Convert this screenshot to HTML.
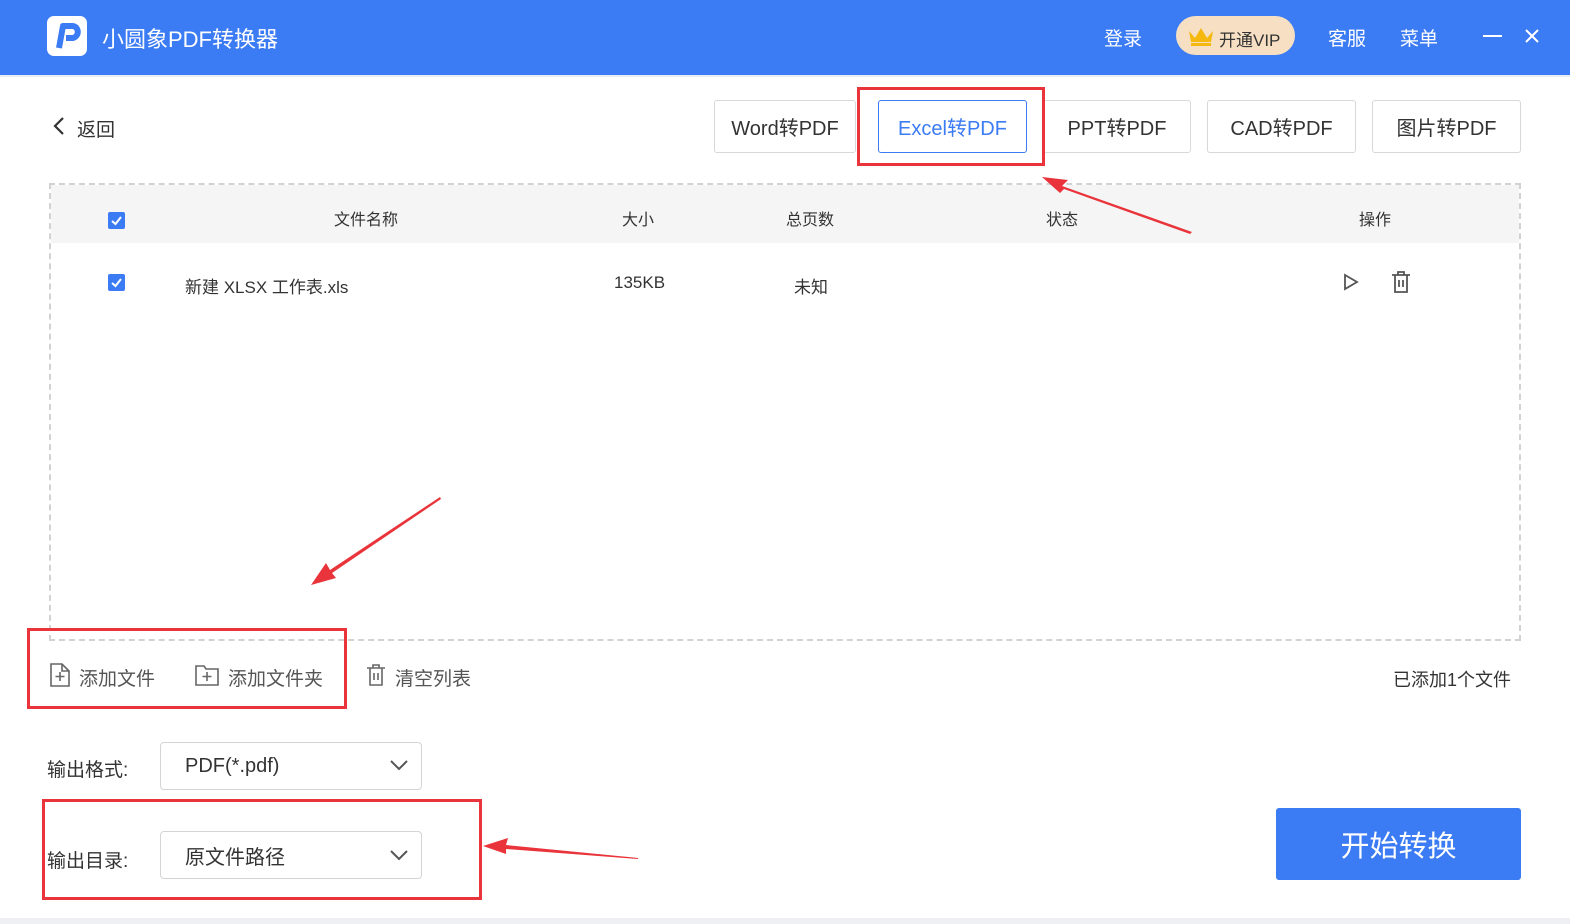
<!DOCTYPE html><html><head><meta charset="utf-8"><style>
*{margin:0;padding:0;box-sizing:border-box}
body{width:1570px;height:924px;position:relative;background:#fff;font-family:"Liberation Sans","Noto Sans CJK SC",sans-serif;color:#333;overflow:hidden}
.a{position:absolute}
.hdr{left:0;top:0;width:1570px;height:75px;background:#3b7bf4}
.tab{position:absolute;top:100px;height:53px;border:1px solid #d8d8d8;border-radius:3px;font-size:20px;color:#333;display:flex;align-items:center;justify-content:center;background:#fff}
.red{position:absolute;border:3px solid #e8343a}
.sel{position:absolute;height:48px;border:1px solid #d4d4d4;border-radius:4px;display:flex;align-items:center;padding-left:24px;font-size:20px;color:#333;background:#fff}
.cb{position:absolute;width:17px;height:17px;background:#3b7bf4;border-radius:2px}
</style></head><body>
<div class="a hdr"></div>
<div class="a" style="left:47px;top:16px;width:40px;height:40px;background:#fff;border-radius:7px"></div>
<svg class="a" style="left:47px;top:16px" width="40" height="40"><path d="M12 32 L16 10 H25 C32 10 33 20 26 22 H19" fill="none" stroke="#3b7bf4" stroke-width="6" stroke-linejoin="round"/></svg>
<div class="a" style="left:102px;top:22px;font-size:22px;color:#fff">小圆象PDF转换器</div>
<div class="a" style="left:1104px;top:24px;font-size:19px;color:#fff">登录</div>
<div class="a" style="left:1176px;top:16px;width:119px;height:39px;background:#f6dfc2;border-radius:20px"></div>
<svg class="a" style="left:1187px;top:25px" width="28" height="22"><path d="M2 6 L8 13 L14 3 L20 13 L26 6 L24 17 H4Z" fill="#f5b80e"/><rect x="4" y="18" width="20" height="3" fill="#f5b80e"/></svg>
<div class="a" style="left:1219px;top:26px;font-size:17px;color:#333">开通VIP</div>
<div class="a" style="left:1328px;top:24px;font-size:19px;color:#fff">客服</div>
<div class="a" style="left:1400px;top:24px;font-size:19px;color:#fff">菜单</div>
<div class="a" style="left:1483px;top:35px;width:19px;height:2px;background:#fff"></div>
<svg class="a" style="left:1524px;top:28px" width="16" height="16"><path d="M2 2L14 14M14 2L2 14" stroke="#fff" stroke-width="2"/></svg>
<div class="a" style="left:0;top:75px;width:1570px;height:2px;background:#e9edf5"></div>

<svg class="a" style="left:52px;top:116px" width="14" height="20"><path d="M11 2L3 10L11 18" fill="none" stroke="#333" stroke-width="2.2"/></svg>
<div class="a" style="left:77px;top:115px;font-size:19px">返回</div>

<div class="tab" style="left:714px;width:142px">Word转PDF</div>
<div class="tab" style="left:878px;width:149px;border-color:#3b7bf4;color:#3b7bf4">Excel转PDF</div>
<div class="tab" style="left:1043px;width:148px">PPT转PDF</div>
<div class="tab" style="left:1207px;width:149px">CAD转PDF</div>
<div class="tab" style="left:1372px;width:149px">图片转PDF</div>
<div class="red" style="left:857px;top:87px;width:188px;height:79px"></div>

<div class="a" style="left:49px;top:183px;width:1472px;height:458px;border:2px dashed #d2d2d2"></div>
<div class="a" style="left:51px;top:185px;width:1468px;height:58px;background:#f5f5f5"></div>
<div class="cb" style="left:108px;top:212px"></div>
<svg class="a" style="left:108px;top:212px" width="17" height="17"><path d="M4 9L7.5 12L13 5" fill="none" stroke="#fff" stroke-width="2"/></svg>
<div class="a" style="left:334px;top:206px;font-size:16px">文件名称</div>
<div class="a" style="left:622px;top:206px;font-size:16px">大小</div>
<div class="a" style="left:786px;top:206px;font-size:16px">总页数</div>
<div class="a" style="left:1046px;top:206px;font-size:16px">状态</div>
<div class="a" style="left:1359px;top:206px;font-size:16px">操作</div>
<div class="cb" style="left:108px;top:274px"></div>
<svg class="a" style="left:108px;top:274px" width="17" height="17"><path d="M4 9L7.5 12L13 5" fill="none" stroke="#fff" stroke-width="2"/></svg>
<div class="a" style="left:185px;top:273px;font-size:17px">新建 XLSX 工作表.xls</div>
<div class="a" style="left:614px;top:273px;font-size:17px">135KB</div>
<div class="a" style="left:794px;top:273px;font-size:17px">未知</div>
<svg class="a" style="left:1342px;top:272px" width="18" height="20"><path d="M3 3L15 10L3 17Z" fill="none" stroke="#555" stroke-width="1.8"/></svg>
<svg class="a" style="left:1390px;top:270px" width="22" height="24"><path d="M2 5H20M8 5V2H14V5M5 5V22H17V5M9 10V17M13 10V17" fill="none" stroke="#555" stroke-width="1.8"/></svg>

<svg class="a" style="left:49px;top:662px" width="22" height="26"><path d="M2 2H13L20 9V24H2Z M13 2V9H20 M11 10V19 M6.5 14.5H15.5" fill="none" stroke="#666" stroke-width="1.6"/></svg>
<div class="a" style="left:79px;top:664px;font-size:19px;color:#555">添加文件</div>
<svg class="a" style="left:194px;top:663px" width="26" height="24"><path d="M2 3H10L12 6H24V22H2Z M13 9V18 M8.5 13.5H17.5" fill="none" stroke="#666" stroke-width="1.6"/></svg>
<div class="a" style="left:228px;top:664px;font-size:19px;color:#555">添加文件夹</div>
<svg class="a" style="left:365px;top:663px" width="22" height="24"><path d="M2 5H20M8 5V2H14V5M5 5V22H17V5M9 10V17M13 10V17" fill="none" stroke="#666" stroke-width="1.6"/></svg>
<div class="a" style="left:395px;top:664px;font-size:19px;color:#555">清空列表</div>
<div class="a" style="left:1393px;top:666px;font-size:18px;color:#333">已添加1个文件</div>
<div class="red" style="left:27px;top:628px;width:320px;height:81px"></div>

<div class="a" style="left:47px;top:755px;font-size:19px">输出格式:</div>
<div class="sel" style="left:160px;top:742px;width:262px">PDF(*.pdf)</div>
<svg class="a" style="left:389px;top:758px" width="20" height="14"><path d="M2 3L10 11L18 3" fill="none" stroke="#555" stroke-width="2"/></svg>
<div class="a" style="left:47px;top:846px;font-size:19px">输出目录:</div>
<div class="sel" style="left:160px;top:831px;width:262px">原文件路径</div>
<svg class="a" style="left:389px;top:848px" width="20" height="14"><path d="M2 3L10 11L18 3" fill="none" stroke="#555" stroke-width="2"/></svg>
<div class="red" style="left:42px;top:799px;width:440px;height:101px"></div>

<div class="a" style="left:1276px;top:808px;width:245px;height:72px;background:#3b7bf4;border-radius:3px;color:#fff;font-size:29px;display:flex;align-items:center;justify-content:center">开始转换</div>
<div class="a" style="left:0;top:918px;width:1570px;height:6px;background:#eef0f3"></div>

<svg class="a" style="left:0;top:0" width="1570" height="924">
<g fill="#e8343a">
<polygon points="1192,232 1062,186 1068,180 1042,177 1060,193 1064,189 1190,234"/>
<polygon points="440,497 330,570 326,563 311,585 336,578 332,573 441,499"/>
<polygon points="638,858 506,845 508,838 483,846 506,854 506,849 638,859"/>
</g></svg>
</body></html>
